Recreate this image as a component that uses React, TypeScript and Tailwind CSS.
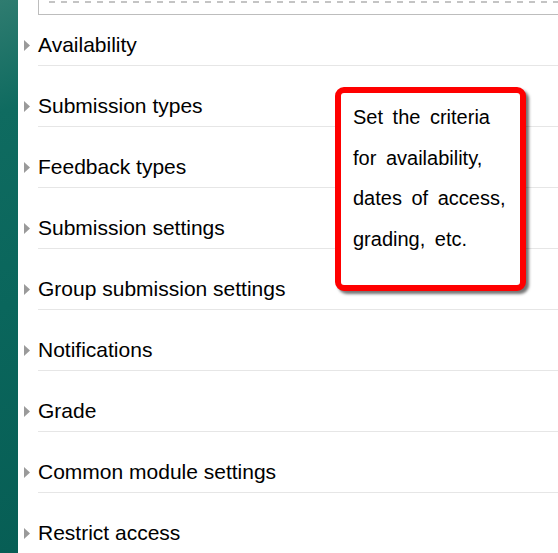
import React from "react";

const items = [
  "Availability",
  "Submission types",
  "Feedback types",
  "Submission settings",
  "Group submission settings",
  "Notifications",
  "Grade",
  "Common module settings",
  "Restrict access",
];

function Tri() {
  return (
    <svg width="6" height="11" viewBox="0 0 6 11" className="shrink-0">
      <path d="M0 0 L6 5.5 L0 11 Z" fill="#9a9a9a" />
    </svg>
  );
}

export default function App() {
  return (
    <div
      className="relative flex h-[553px] w-[558px] overflow-hidden bg-white"
      style={{ fontFamily: '"Liberation Sans", Arial, sans-serif' }}
    >
      <div className="h-full w-[18px] shrink-0 bg-[linear-gradient(160deg,#2f7c70_0%,#0f6b60_20%,#0a665c_55%,#075e55_100%)]" />
      <div className="flex min-w-0 flex-1 flex-col">
        <div className="ml-[20px] h-[15px] border-b border-l border-[#bdbdbd] pl-[10px]">
          <div className="mt-[1px] h-[2px] bg-[repeating-linear-gradient(90deg,#c4c4c4_0px,#c4c4c4_6px,transparent_6px,transparent_12px)]" />
        </div>
        {items.map((t, i) => (
          <div key={t} className="flex flex-col">
            <div
              className={`flex h-[22px] items-center ${i === 0 ? "mt-[19px]" : "mt-[29px]"}`}
            >
              <div className="ml-[6px] mr-[8px] flex items-center">
                <Tri />
              </div>
              <span className="whitespace-nowrap text-[21px] leading-[22px] text-black">{t}</span>
            </div>
            {i < items.length - 1 && (
              <div className="ml-[20px] mt-[9px] h-px bg-[#e6e6e6]" />
            )}
          </div>
        ))}
      </div>
      <div className="absolute left-[335px] top-[87px] h-[204px] w-[191px] rounded-[9px] border-[6px] border-[#ff0000] bg-white shadow-[3px_3px_3px_rgba(0,0,0,0.55)]">
        <div className="pl-[12px] pt-[4px] text-[20px] leading-[40.7px] text-black [word-spacing:4px]">
          <div className="whitespace-nowrap">Set the criteria</div>
          <div className="whitespace-nowrap">for availability,</div>
          <div className="whitespace-nowrap">dates of access,</div>
          <div className="whitespace-nowrap">grading, etc.</div>
        </div>
      </div>
    </div>
  );
}
